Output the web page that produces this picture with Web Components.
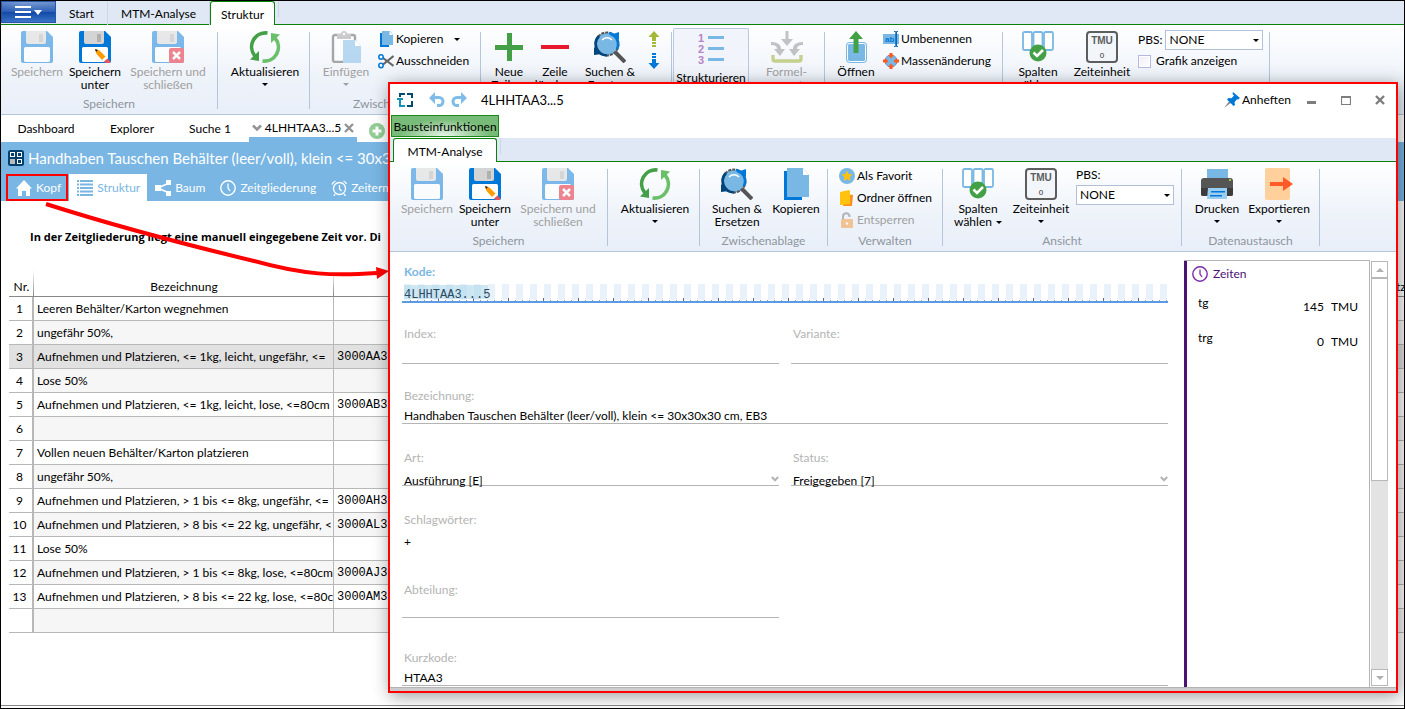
<!DOCTYPE html>
<html lang="de">
<head>
<meta charset="utf-8">
<title>4LHHTAA3...5 – Struktur</title>
<style>
  html, body { margin: 0; }
  body {
    font: 12px/16px Lato, "Open Sans", sans-serif;
    color: #000; background: #fff;
  }
</style>
</head>
<body>
<mtm-app></mtm-app>

<script>
const icons = {
  save: [32, '<path d="M2 0H26L32 6V30a2 2 0 0 1-2 2H2a2 2 0 0 1-2-2V2a2 2 0 0 1 2-2Z" fill="#0078d7"/><path d="M5 0H25V11a2 2 0 0 1-2 2H7a2 2 0 0 1-2-2Z" fill="#d4d4d4"/><path d="M18 3h4v8h-4z" fill="#b0b0b0"/><rect x="3" y="16" width="26" height="15" rx="1.5" fill="#fff"/>'],
  saveas: [32, '<path d="M2 0H26L32 6V30a2 2 0 0 1-2 2H2a2 2 0 0 1-2-2V2a2 2 0 0 1 2-2Z" fill="#0078d7"/><path d="M5 0H25V11a2 2 0 0 1-2 2H7a2 2 0 0 1-2-2Z" fill="#d4d4d4"/><path d="M18 3h4v8h-4z" fill="#b0b0b0"/><rect x="3" y="16" width="26" height="15" rx="1.5" fill="#fff"/><path d="M16 18l4.500 1.500L28 27l-3.500 3.500L17.500 23Z" fill="#ff9d00"/><path d="M16 18l3 1-2 2Z" fill="#222"/><path d="M26.500 25.500l2 2-3.500 3.500-2-2Z" fill="#fff"/><path d="M28.500 27.500l2 2a1.500 1.500 0 0 1-3 3l-2.500-2Z" fill="#e5535e"/>'],
  saveclose: [32, '<path d="M2 0H26L32 6V30a2 2 0 0 1-2 2H2a2 2 0 0 1-2-2V2a2 2 0 0 1 2-2Z" fill="#0078d7"/><path d="M5 0H25V11a2 2 0 0 1-2 2H7a2 2 0 0 1-2-2Z" fill="#d4d4d4"/><path d="M18 3h4v8h-4z" fill="#b0b0b0"/><rect x="3" y="16" width="26" height="15" rx="1.500" fill="#fff"/><rect x="17" y="17" width="15" height="15" rx="2" fill="#e81123"/><path d="M21 21l7 7M28 21l-7 7" stroke="#fff" stroke-width="2.500"/>'],
  refresh: [32, '<g fill="none" stroke-width="3.600"><path d="M18.500 2A14 14 0 0 0 6 25" stroke="#43a047"/><path d="M13.500 30A14 14 0 0 0 26 7" stroke="#6abf69"/></g><path d="M1 28.500L10 30V20Z" fill="#43a047"/><path d="M31 3.500L22 2V12Z" fill="#6abf69"/>'],
  paste: [32, '<rect x="3" y="4" width="22" height="27" rx="2" fill="#fff" stroke="#555" stroke-width="2.400"/><path d="M7 3h4a3 3 0 0 1 6 0h4v5H7Z" fill="#999"/><circle cx="14" cy="3" r="1.300" fill="#fff"/><path d="M13 9H25l6 6V32H13Z" fill="#79b8e4"/><path d="M25 9v6h6Z" fill="#fff"/>'],
  copy: [32, '<path d="M4 3H22V32H4Z" fill="#0078d7"/><path d="M7 0H23L29 7V29H7Z" fill="#79b8e4"/><path d="M23 0L29 7H23Z" fill="#fff"/><path d="M22.500 0V7.500H29" fill="none" stroke="#79b8e4"/>'],
  copysmall: [16, '<path d="M2 2H11V16H2Z" fill="#0078d7"/><path d="M4 0H12L15 3.500V14H4Z" fill="#79b8e4"/><path d="M11.500 0L15 4H11.500Z" fill="#fff"/>'],
  cut: [16, '<path d="M5 5L15.500 13M5 11.500L15.500 3" stroke="#666" stroke-width="2.200"/><circle cx="3" cy="4" r="2.200" fill="none" stroke="#0078d7" stroke-width="1.500"/><circle cx="3" cy="12.500" r="2.200" fill="none" stroke="#0078d7" stroke-width="1.500"/>'],
  plus: [32, '<path d="M14 2h5v12h11v5H19v11h-5V19H2v-5h12Z" fill="#43a047"/>'],
  minus: [32, '<path d="M2 14H30v4H2Z" fill="#e8192c"/>'],
  search: [32, '<path d="M20 20l11 11" stroke="#555" stroke-width="4"/><circle cx="13" cy="13" r="11.500" fill="#79b8e4" stroke="#555" stroke-width="2" stroke-dasharray="3 1"/><path d="M13 24.500A11.500 11.500 0 0 1 5 5M2 14a11 11 0 0 0 3 8" fill="none" stroke="#00457c" stroke-width="2.600"/><path d="M0 24V16l8 7Z" fill="#00457c"/><path d="M15 2a11.500 11.500 0 0 1 8 16" fill="none" stroke="#0078d7" stroke-width="2.600"/><path d="M16 4L25 1V9Z" fill="#0078d7"/><path d="M8 9c3-3 7-3 10 0" fill="none" stroke="#fff" stroke-width="1.600"/>'],
  moveup: [16, '<path d="M8 0l5.500 6H10v4H6V6H2.500Z M6 11h4v2H6Z M6 14h4v2H6Z" fill="#a4b83a"/>'],
  movedown: [16, '<path d="M8 16l5.500-6H10V6H6v4H2.500Z M6 3h4v2H6Z M6 0h4v2H6Z" fill="#0078d7"/>'],
  structure: [32, '<g fill="#b583c7" font-family="Liberation Sans, sans-serif" font-weight="bold" font-size="11"><text x="3" y="9">1</text><text x="3" y="20">2</text><text x="3" y="31">3</text></g><path d="M13 3h16v3H13ZM13 14h16v3H13ZM13 25h16v3H13Z" fill="#79b8e4"/>'],
  formula: [32, '<g fill="#8a8a8a"><path d="M14.500 0h3v8H22l-6 7-6-7h4.500Z"/><path d="M0 11c7 0 10 3 10 7h4l-5 7-6-7h3c0-3-2-4-6-4Z"/><path d="M32 11c-7 0-10 3-10 7h-4l5 7 6-7h-3c0-3 2-4 6-4Z"/></g><path d="M2 24v4a2 2 0 0 0 2 2h24a2 2 0 0 0 2-2v-4" fill="none" stroke="#97ab1f" stroke-width="3.400"/>'],
  open: [32, '<rect x="6.500" y="11.500" width="20" height="20" rx="3" fill="#79b8e4" stroke="#79b8e4"/><rect x="7.500" y="12.500" width="18" height="18" rx="2" fill="none" stroke="#fff"/><path d="M16 0l7 8h-4.500v14h-5V8H9Z" fill="#43a047"/>'],
  rename: [16, '<path d="M0 3h16v10H0Z" fill="#79b8e4"/><text x="2" y="11" font-family="Liberation Sans, sans-serif" font-weight="bold" font-size="8" fill="#0078d7">ab</text><path d="M11 0h1.500l.5 1 .5-1H15v1h-1v14h1v1h-1.500l-.5-1-.5 1H11v-1h1.300V1H11Z" fill="#0067c0"/>'],
  mass: [16, '<circle cx="8" cy="8" r="6" fill="#79b8e4" stroke="#4b9bd3"/><path d="M6.500 0h3v2H11L8 5.500 5 2h1.500ZM6.500 16h3v-2H11L8 10.500 5 14h1.500ZM0 6.500v3h2V11l3.500-3L2 5v1.500ZM16 6.500v3h-2V11l-3.500-3L14 5v1.500Z" fill="#ff5722"/>'],
  columns: [32, '<g fill="#fff" stroke="#79b8e4" stroke-width="1.800"><rect x="1" y="1" width="9" height="18" rx="1.500"/><rect x="11.500" y="1" width="9" height="18" rx="1.500"/><rect x="22" y="1" width="9" height="18" rx="1.500"/></g><circle cx="16" cy="22" r="8.500" fill="#43a047"/><path d="M11.500 21.500l3.500 3.500 6-6" fill="none" stroke="#fff" stroke-width="2.600"/>'],
  unit: [32, '<rect x="1" y="1" width="30" height="30" rx="3" fill="#f2f5fa" stroke="#5d5d5d" stroke-width="2"/><text x="16" y="13" text-anchor="middle" font-family="Liberation Sans, sans-serif" font-weight="bold" font-size="10" fill="#5d5d5d">TMU</text><text x="16" y="27" text-anchor="middle" font-family="Liberation Sans, sans-serif" font-size="8" fill="#333">0</text>'],
  printer: [32, '<path d="M6 1H27V12H6Z" fill="#79b8e4"/><path d="M3 10H29a3 3 0 0 1 3 3V26a2 2 0 0 1-2 2H2a2 2 0 0 1-2-2V13a3 3 0 0 1 3-3Z" fill="#555"/><path d="M0 20H32v6a2 2 0 0 1-2 2H2a2 2 0 0 1-2-2Z" fill="#3d3d3d"/><path d="M28 11h2v2h-2z" fill="#a4c639"/><path d="M7 20H26V31H6Z" fill="#9bcdf0"/><path d="M10 23h14v1.500H10ZM9 27h12v1.500H9Z" fill="#0078d7"/>'],
  exporticon: [32, '<rect x="2" width="25" height="32" rx="2" fill="#ffcf9c"/><path d="M7 14H20V9l10 7-10 7V18H7Z" fill="#ff5b29"/>'],
  favorite: [16, '<circle cx="8" cy="8" r="8" fill="#79b8e4"/><path d="M8 2.500l1.600 3.600 3.900.4-2.900 2.600.8 3.900L8 11l-3.400 2 .8-3.900L2.500 6.500l3.900-.4Z" fill="#ffc20e"/>'],
  folder: [16, '<path d="M5 4l9 1-1 11H4Z" fill="#ff8f1c"/><path d="M1 2l9-2 1 1v13L1 15Z" fill="#ffc20e"/>'],
  unlock: [16, '<path d="M4 8V4a3.300 3.300 0 0 1 6.500 0v1" fill="none" stroke="#777" stroke-width="2"/><rect x="2" y="7" width="12" height="9" rx="1" fill="#f59331"/><circle cx="8" cy="11.500" r="1.200" fill="#fff"/>'],
  home: [16, '<path d="M8 0l8 8.500h-2V16h-4v-5H6v5H2V8.500H0Z" fill="currentColor"/>'],
  list: [16, '<path d="M0 0h2v2H0ZM3 0h13v2H3ZM0 3.500h2v2H0ZM3 3.500h13v2H3ZM0 7h2v2H0ZM3 7h13v2H3ZM0 10.500h2v2H0ZM3 10.500h13v2H3ZM0 14h2v2H0ZM3 14h13v2H3Z" fill="currentColor"/>'],
  tree: [16, '<path d="M3 8L14 3M3 8l11 5" stroke="currentColor" stroke-width="1.800"/><path d="M0 5h6v6H0ZM11 0h5v5h-5ZM11 11h5v5h-5Z" fill="currentColor"/>'],
  clock: [16, '<circle cx="8" cy="8" r="7.200" fill="none" stroke="currentColor" stroke-width="1.400"/><path d="M8 3.500V8l2 3" fill="none" stroke="currentColor" stroke-width="1.300"/>'],
  alarm: [16, '<circle cx="8.500" cy="8.500" r="6" fill="none" stroke="currentColor" stroke-width="1.300"/><path d="M8.500 5v4l2 2M1 4.500A6 6 0 0 1 4.500 1M12.500 1A6 6 0 0 1 15.500 4M4 14l-1 2M13 14l1.500 2" fill="none" stroke="currentColor" stroke-width="1.300"/>'],
  module: [16, '<rect width="16" height="16" rx="2.500" fill="#00406e"/><g fill="none" stroke="#fff"><rect x="2.500" y="2.500" width="4" height="4"/><rect x="9.500" y="2.500" width="4" height="4"/><rect x="9.500" y="9.500" width="4" height="4"/></g><path d="M2 9h5v5H2z" fill="#bbb"/>'],
  add: [16, '<circle cx="8" cy="8" r="8" fill="#92cd94"/><path d="M6.500 3.500h3v3h3v3h-3v3h-3v-3h-3v-3h3Z" fill="#fff"/>'],
  chevron: [10, '<path d="M1 2.500l4 4 4-4" fill="none" stroke="currentColor" stroke-width="2.600"/>'],
  close: [10, '<path d="M1 1l8 8M9 1L1 9" stroke="currentColor" stroke-width="2.400"/>'],
  maximize: [10, '<path d="M.5 1.500h9v8h-9ZM.5 2.500h9" fill="none" stroke="currentColor" stroke-width="1.200"/>'],
  minimize: [10, '<path d="M0 6h9v3H0Z" fill="currentColor"/>'],
  logo: [16, '<path d="M3 5V2h5M10 2h5v4M15 9v5h-5" fill="none" stroke="#004b6e" stroke-width="2"/><path d="M0 7h6M3 6v8h5" fill="none" stroke="#1192b8" stroke-width="2"/>'],
  undo: [16, '<path d="M0 6l6-6v4h4a5.500 5.500 0 0 1 0 11H8v-3h2a2.500 2.500 0 0 0 0-5H6v5Z" fill="#7fbce8"/>'],
  redo: [16, '<path d="M16 6l-6-6v4H6a5.500 5.500 0 0 0 0 11h2v-3H6a2.500 2.500 0 0 1 0-5h4v5Z" fill="#7fbce8"/>'],
  pin: [16, '<path d="M0 16l6-8 2 2Z" fill="#8a8a8a"/><path d="M9 0l7 6-2 1.500-1-.3-2.500 3 .5 2.800-1.500 1L3 7.500 4.500 6l3 .3L10 3.500 8.500 2Z" fill="#0078d7"/>'],
  up: [8, '<path d="M0 6L4 2l4 4Z" fill="currentColor"/>'],
  down: [8, '<path d="M0 2h8L4 6Z" fill="currentColor"/>'],
};

class ShadowElement extends HTMLElement {
  connectedCallback() {
    if (this.shadowRoot) return;
    const root = this.attachShadow({ mode: "open" });
    const t = document.createElement("template");
    t.innerHTML = this.render();
    root.append(t.content.cloneNode(true));
  }
  attr(name, fallback = "") { return this.getAttribute(name) ?? fallback; }
}

customElements.define("mtm-icon", class extends ShadowElement {
  render() {
    const [box, shapes] = icons[this.attr("name")];
    const size = this.attr("size", box);
    return `<style>:host{display:inline-flex;flex:none}svg{display:block}</style>
      <svg width="${size}" height="${size}" viewBox="0 0 ${box} ${box}" aria-hidden="true">${shapes}</svg>`;
  }
});

/* Large ribbon button: icon over a label of one or two lines. */
customElements.define("ribbon-button", class extends ShadowElement {
  render() {
    return `<style>
      :host{display:flex;flex:none;width:var(--w,58px)}
      button{all:unset;box-sizing:border-box;width:100%;display:flex;flex-direction:column;align-items:center;
        gap:2px;line-height:13px;text-align:center;white-space:nowrap}
      button:disabled{color:#a0a0a0}
      button:disabled mtm-icon{opacity:.5}
      .arrow{border:3px solid transparent;border-top-color:currentColor;border-bottom:0;width:0;margin-top:3px}
      :host([pressed]) button{border:1px solid #b9c9de;border-bottom:0;background:#f1f5fb;border-radius:2px 2px 0 0;
        gap:6px;padding-top:4px;margin-top:-3px}
    </style>
    <button type="button" ${this.hasAttribute("disabled") ? "disabled" : ""} ${this.hasAttribute("pressed") ? 'aria-pressed="true"' : ""}>
      <mtm-icon name="${this.attr("icon")}"></mtm-icon>
      <span><slot></slot></span>
      ${this.hasAttribute("menu") ? '<span class="arrow"></span>' : ""}
    </button>`;
  }
});

customElements.define("menu-arrow", class extends ShadowElement {
  render() {
    return `<style>:host{display:inline-block;vertical-align:middle;margin-left:var(--gap,4px);border:3px solid transparent;
      border-top-color:currentColor;border-bottom:0;width:0}</style>`;
  }
});

/* Small ribbon button: 16px icon beside its label. */
customElements.define("ribbon-item", class extends ShadowElement {
  render() {
    return `<style>
      :host{display:flex}
      button{all:unset;display:flex;align-items:center;gap:2px;height:18px;white-space:nowrap}
      button:disabled{color:#a0a0a0}
      button:disabled mtm-icon{opacity:.5}
    </style>
    <button type="button" ${this.hasAttribute("disabled") ? "disabled" : ""} aria-label="${this.attr("label", this.textContent)}">
      <mtm-icon name="${this.attr("icon")}"></mtm-icon><span><slot></slot></span>
    </button>`;
  }
});

customElements.define("ribbon-group", class extends ShadowElement {
  render() {
    return `<style>
      :host{display:flex;flex:none;width:var(--group)}
      .body{flex:1;min-width:0;display:flex;flex-direction:column}
      .items{flex:1;display:flex;align-items:flex-start;padding:6px 0 0 var(--pad,4px)}
      .label{height:18px;line-height:16px;text-align:center;color:#8f959d}
      .rule{flex:none;width:1px;margin:7px 0 5px;background:#b4c6da}
    </style>
    <div class="body"><div class="items"><slot></slot></div><div class="label">${this.attr("label")}</div></div>
    <div class="rule"></div>`;
  }
});

customElements.define("ribbon-bar", class extends ShadowElement {
  render() {
    return `<style>:host{display:flex;height:89px;overflow:hidden;border-bottom:1px solid #b4c6da;
      background:linear-gradient(#fff,#eef3fa 60%,#e9eff9)}</style><slot></slot>`;
  }
});

/* Stack of small controls inside a ribbon group. */
customElements.define("ribbon-stack", class extends ShadowElement {
  render() {
    return `<style>:host{display:flex;flex-direction:column;gap:4px;margin:-1px 0 0 var(--lead,0)}</style><slot></slot>`;
  }
});

customElements.define("ribbon-select", class extends ShadowElement {
  render() {
    const stacked = this.hasAttribute("stacked");
    return `<style>
      label{display:flex;flex-direction:${stacked ? "column" : "row"};gap:3px;
        align-items:${stacked ? "flex-start" : "center"};line-height:${stacked ? "14px" : "20px"}}
      .box{position:relative;display:flex}
      select{appearance:none;box-sizing:border-box;width:98px;height:20px;padding:0 3px;margin:0;border:1px solid #b2bfd8;border-radius:0;
        background:#fff;font:inherit;line-height:18px;color:#000}
      menu-arrow{position:absolute;right:4px;top:9px}
    </style>
    <label>PBS:<span class="box"><select><option>NONE</option></select><menu-arrow></menu-arrow></span></label>`;
  }
});

customElements.define("ribbon-check", class extends ShadowElement {
  render() {
    return `<style>
      label{display:flex;align-items:center;gap:5px;line-height:14px;white-space:nowrap}
      input{appearance:none;box-sizing:border-box;width:13px;height:13px;margin:0;border:1px solid #b5b9e0;
        background:linear-gradient(135deg,#ececf6,#fff);box-shadow:inset 0 0 0 1px #fff}
    </style><label><input type="checkbox"><slot></slot></label>`;
  }
});

/* Row of ribbon tabs; the selected one is open towards the ribbon below. */
customElements.define("ribbon-tabs", class extends ShadowElement {
  render() {
    const active = this.attr("active");
    return `<style>
      :host{display:flex;height:24px;background:#dfe8f4;box-shadow:inset 0 -1px #0a800a;padding-left:var(--pad,0)}
      a{box-sizing:border-box;display:block;height:24px;line-height:26px;text-align:center;color:#000;text-decoration:none;width:var(--w);
        border-right:1px solid #cbd6e6;background:linear-gradient(#0a800a,#0a800a) bottom/100% 1px no-repeat}
      a[aria-current]{background:#fff;border:1px solid #0a800a;border-width:1px 1px 0;border-radius:3px 3px 0 0}
      i{width:3px;height:16px;border-right:1px solid #cbd6e6}
    </style><slot></slot>
    ${this.attr("tabs").split(";").map(t => { const [n, w] = t.split(":");
      return `<a href="#" style="--w:${w}px" ${n === active ? 'aria-current="page"' : ""}>${n}</a>`; }).join("")}<i></i>`;
  }
});

customElements.define("app-menu", class extends ShadowElement {
  render() {
    return `<style>
      button{all:unset;box-sizing:border-box;width:55px;height:22px;display:flex;align-items:center;justify-content:center;gap:3px;
        border:1px solid #2a56a8;background:linear-gradient(90deg,#1f55ad55,#fff0 40%,#1f55ad33),linear-gradient(#7f9fd6,#2f62b8 48%,#0f48a6 52%,#3f78cb)}
      .bars{width:16px;height:12px;box-sizing:border-box;border:solid #fff;border-width:2px 0;background:linear-gradient(#fff,#fff) center/100% 2px no-repeat}
      .tri{border:4px solid transparent;border-top:5px solid #fff;border-bottom:0}
    </style><button type="button" aria-label="Menü"><span class="bars"></span><span class="tri"></span></button>`;
  }
});

customElements.define("document-tabs", class extends ShadowElement {
  render() {
    return `<style>
      :host{display:flex;height:27px}
      a{box-sizing:border-box;color:#000;text-decoration:none;line-height:28px;text-align:center;width:var(--w)}
      .on{box-sizing:border-box;width:108px;margin-left:2px;display:flex;align-items:center;justify-content:space-between;padding:0 3px 0 3px;border-bottom:5px solid #79b6e3;color:#949494}
      .on a{line-height:18px;margin-top:4px}
      button{all:unset;display:flex;color:#949494;margin-top:4px}
      mtm-icon{color:#949494}
      .add{margin:8px 0 0 12px}
      .on > mtm-icon{margin-top:4px}
    </style>
    <a href="#" style="--w:90px">Dashboard</a><a href="#" style="--w:82px">Explorer</a><a href="#" style="--w:74px">Suche 1</a>
    <div class="on"><mtm-icon name="chevron"></mtm-icon><a href="#">4LHHTAA3...5</a><button type="button" aria-label="Schließen"><mtm-icon name="close"></mtm-icon></button></div>
    <button type="button" class="add" aria-label="Neuer Tab"><mtm-icon name="add"></mtm-icon></button>`;
  }
});

customElements.define("document-header", class extends ShadowElement {
  render() {
    const tabs = [["home","Kopf"],["list","Struktur"],["tree","Baum"],["clock","Zeitgliederung"],["alarm","Zeitermittlung"]];
    return `<style>
      :host{display:block;background:#79b6e3;color:#fff}
      h1{margin:0;height:32px;padding-left:7px;display:flex;align-items:center;gap:4px;font-weight:400;font-size:15px;white-space:nowrap}
      nav{display:flex;padding-left:5px;height:27px}
      a{display:flex;align-items:center;gap:4px;padding:0 7px 0 8px;color:#fff;text-decoration:none}
      .Kopf{box-shadow:inset 0 0 0 2px #f00;padding:0 7px 0 10px;margin-right:1px}
      [aria-current]{background:#fff;color:#79b6e3}
    </style>
    <h1><mtm-icon name="module"></mtm-icon>Handhaben Tauschen Behälter (leer/voll), klein &lt;= 30x30x30 cm, EB3</h1>
    <nav>${tabs.map(([i, n]) => `<a href="#" class="${n}" ${n === "Struktur" ? 'aria-current="page"' : ""}><mtm-icon name="${i}"></mtm-icon>${n}</a>`).join("")}</nav>`;
  }
});

customElements.define("structure-table", class extends ShadowElement {
  render() {
    const rows = [
      ["Leeren Behälter/Karton wegnehmen"], ["ungefähr 50%,"],
      ["Aufnehmen und Platzieren, <= 1kg, leicht, ungefähr, <=", "3000AA3."], ["Lose 50%"],
      ["Aufnehmen und Platzieren, <= 1kg, leicht, lose, <=80cm", "3000AB3."], [""],
      ["Vollen neuen Behälter/Karton platzieren"], ["ungefähr 50%,"],
      ["Aufnehmen und Platzieren, > 1 bis <= 8kg, ungefähr, <=", "3000AH3."],
      ["Aufnehmen und Platzieren, > 8 bis <= 22 kg, ungefähr, <", "3000AL3."], ["Lose 50%"],
      ["Aufnehmen und Platzieren, > 1 bis <= 8kg, lose, <=80cm", "3000AJ3."],
      ["Aufnehmen und Platzieren, > 8 bis <= 22 kg, lose, <=80c", "3000AM3."], [""],
    ];
    const esc = s => (s || "").replace(/</g, "&lt;").replace(/>/g, "&gt;");
    return `<style>
      :host{display:block;padding-left:8px}
      table{width:100%;table-layout:fixed;border-collapse:separate;border-spacing:0}
      td,th{box-sizing:border-box;padding:0 0 0 3px;overflow:hidden;white-space:nowrap;font-weight:400;border-bottom:1px solid #b8b8b8}
      th{height:27px;padding:7px 0 0;border-bottom-color:#888}
      td{height:24px}
      th:not(:last-child){background:linear-gradient(#fff,#888) right/1px 100% no-repeat}
      td:nth-child(1){text-align:center;padding:0 2px 0 0;border-right:2px solid #b8b8b8}
      td:nth-child(2){border-right:1px solid #b8b8b8}
      td:nth-child(3){font-family:"Liberation Mono",monospace}
      tr:nth-child(even) td:not(:first-child){background:#f6f6f6}
      tr.sel td{background:#e1e1e1}
      .nr{width:25px}.name{width:300px}.last{width:8px}
      th:last-child{text-align:left;padding-left:0}
    </style>
    <table><colgroup><col class="nr"><col class="name"><col><col class="last"></colgroup>
      <thead><tr><th>Nr.</th><th>Bezeichnung</th><th></th><th>tz</th></tr></thead>
      <tbody>${rows.map((r, i) => `<tr ${i === 2 ? 'class="sel"' : ""}><td>${i < 13 ? i + 1 : ""}</td><td>${esc(r[0])}</td><td>${esc(r[1])}</td><td></td></tr>`).join("")}</tbody>
    </table>`;
  }
});

/* Labelled form field with an underline; kind is text, code, select or plus. */
customElements.define("form-field", class extends ShadowElement {
  render() {
    const kind = this.attr("kind", "text"), value = this.attr("value");
    const control = kind === "select"
      ? `<select id="c"><option>${value}</option></select><mtm-icon name="chevron" size="8"></mtm-icon>`
      : kind === "plus" ? `<button id="c" type="button">+</button>`
      : `<input id="c" type="text" value="${value}">`;
    return `<style>
      :host{display:block;height:62px}
      :host([wide]){grid-column:1/-1}
      label{display:block;line-height:16px;padding-left:2px;color:#b4b4b4}
      .box{position:relative;display:flex;height:20px}
      input,select{appearance:none;box-sizing:border-box;width:100%;height:20px;margin:0;padding:4px 2px 0;border:0;border-bottom:1px solid #b4b4b4;
        border-radius:0;background:none;font:inherit;color:#000;outline:0}
      :host([kind=select]) .box{box-shadow:inset 0 -1px #b4b4b4}
      :host([kind=select]) select{height:24px;padding-top:6px;border:0;line-height:18px}
      mtm-icon{position:absolute;right:0;top:9px;color:#b4b4b4}
      button{all:unset;padding:6px 2px 0;line-height:16px}
      :host([kind=code]) label{font-weight:700;color:#79b6e3}
      :host([kind=code]) .box{height:23px}
      :host([kind=code]) input{height:23px;padding-top:8px;border-bottom:2px solid #5a9be3;font-family:"Liberation Mono",monospace;color:#2b4a63;
        background:
          linear-gradient(#add8ea99,#add8ea99) 2px 5px/84px 14px no-repeat,
          repeating-linear-gradient(90deg,#0000 0 34px,#667 34px 35px) 2px 100%/100% 3px no-repeat,
          repeating-linear-gradient(90deg,#0000 0 6px,#99a 6px 7px) 2px 100%/100% 1px no-repeat,
          repeating-linear-gradient(90deg,#e9f2fb 0 7px,#0000 7px 14px) 2px 4px/100% 16px no-repeat}
      :host([low]) .box,:host([low]) input{height:22px}
    </style><label for="c">${this.attr("label")}</label><div class="box">${control}</div>`;
  }
});

customElements.define("time-panel", class extends ShadowElement {
  render() {
    return `<style>
      :host{display:block;box-sizing:border-box;flex:none;width:186px;border:solid #b4b4b4;border-width:1px 1px 0 0;
        box-shadow:inset 3px 0 #4b1173}
      h2{margin:5px 0 13px;padding-left:8px;display:flex;align-items:center;gap:5px;font-size:12px;font-weight:400;color:#4b1173}
      mtm-icon{color:#7b2aa8}
      dl{margin:0;padding:0 11px 0 14px;display:grid;grid-template-columns:1fr auto 34px;row-gap:15px;line-height:16px}
      dt,dd{margin:0} dd{padding-top:4px;text-align:right}
    </style>
    <h2><mtm-icon name="clock"></mtm-icon>Zeiten</h2>
    <dl><dt>tg</dt><dd>145</dd><dd>TMU</dd><dt>trg</dt><dd>0</dd><dd>TMU</dd></dl>`;
  }
});

customElements.define("scroll-rail", class extends ShadowElement {
  render() {
    return `<style>
      :host{display:flex;flex-direction:column;flex:none;width:17px;margin:1px 8px 1px 1px;background:#e3e3e3;color:#b0b0b0}
      button{all:unset;box-sizing:border-box;height:17px;flex:none;display:flex;align-items:center;justify-content:center;border:1px solid #b8b8b8;background:#fff}
      .thumb{flex:0 1 203px;border:1px solid #b8b8b8;box-sizing:border-box;background:#fff}
      .gap{flex:1}
    </style><button type="button" aria-label="Nach oben"><mtm-icon name="up"></mtm-icon></button><div class="thumb"></div><div class="gap"></div>
    <button type="button" aria-label="Nach unten"><mtm-icon name="down"></mtm-icon></button>`;
  }
});

customElements.define("block-window", class extends ShadowElement {
  render() {
    return `<style>
      :host{display:flex;flex-direction:column;box-sizing:border-box;border:2px solid #f00;background:#fff;box-shadow:2px 3px 16px #0006;overflow:hidden}
      header{flex:none;height:31px;display:flex;align-items:center;padding:0 11px 0 7px}
      header button{all:unset;display:flex;align-items:center;color:#7d7d7d}
      h2{margin:0 auto 0 14px;font-size:13px;font-weight:400}
      .undo{margin-left:16px!important}.redo{margin-left:6px!important}
      .pin{color:#000!important;gap:2px;margin-right:16px!important}
      .win{display:flex;gap:24px}
      .context{flex:none;display:flex;height:23px;padding-left:1px}
      .context span{box-sizing:border-box;width:108px;height:22px;line-height:21px;border:1px solid #1b8a1b;text-align:center;
        background:radial-gradient(ellipse at 50% 100%,#e8f5e8,#78bb78 60%)}
      main{flex:1;min-height:0;display:flex;padding-top:8px;overflow:hidden}
      form{flex:1;min-width:0;display:grid;grid-template-columns:1fr 1fr;column-gap:12px;align-content:start;padding:4px 16px 0 12px;height:0}
      .tags{height:70px}.dept{height:68px}
      footer{flex:none;height:3px;border-top:1px solid #b4b4b4;background:#ccc}
    </style>
    <header>
      <mtm-icon name="logo"></mtm-icon>
      <button type="button" class="undo" aria-label="Rückgängig"><mtm-icon name="undo"></mtm-icon></button>
      <button type="button" class="redo" aria-label="Wiederholen"><mtm-icon name="redo"></mtm-icon></button>
      <h2>4LHHTAA3...5</h2>
      <button type="button" class="pin"><mtm-icon name="pin"></mtm-icon>Anheften</button>
      <div class="win">
        <button type="button" aria-label="Minimieren"><mtm-icon name="minimize"></mtm-icon></button>
        <button type="button" aria-label="Maximieren"><mtm-icon name="maximize"></mtm-icon></button>
        <button type="button" aria-label="Schließen"><mtm-icon name="close"></mtm-icon></button>
      </div>
    </header>
    <div class="context"><span>Bausteinfunktionen</span></div>
    <ribbon-tabs tabs="MTM-Analyse:104" active="MTM-Analyse" style="--pad:3px"></ribbon-tabs>
    <ribbon-bar>
      <ribbon-group label="Speichern" style="--group:218px;--pad:8px">
        <ribbon-button icon="save" disabled>Speichern</ribbon-button>
        <ribbon-button icon="saveas">Speichern<br>unter</ribbon-button>
        <ribbon-button icon="saveclose" disabled style="--w:88px">Speichern und<br>schließen</ribbon-button>
      </ribbon-group>
      <ribbon-group style="--group:92px"><ribbon-button icon="refresh" menu style="--w:86px">Aktualisieren</ribbon-button></ribbon-group>
      <ribbon-group label="Zwischenablage" style="--group:128px;--pad:6px">
        <ribbon-button icon="search" style="--w:62px">Suchen &amp;<br>Ersetzen</ribbon-button>
        <ribbon-button icon="copy" style="--w:56px">Kopieren</ribbon-button>
      </ribbon-group>
      <ribbon-group label="Verwalten" style="--group:115px;--pad:0">
        <ribbon-stack style="--lead:11px">
          <ribbon-item icon="favorite">Als Favorit</ribbon-item>
          <ribbon-item icon="folder">Ordner öffnen</ribbon-item>
          <ribbon-item icon="unlock" disabled>Entsperren</ribbon-item>
        </ribbon-stack>
      </ribbon-group>
      <ribbon-group label="Ansicht" style="--group:239px">
        <ribbon-button icon="columns" style="--w:62px">Spalten<br>wählen<menu-arrow></menu-arrow></ribbon-button>
        <ribbon-button icon="unit" menu style="--w:64px">Zeiteinheit</ribbon-button>
        <ribbon-select stacked style="margin-left:3px"></ribbon-select>
      </ribbon-group>
      <ribbon-group label="Datenaustausch" style="--group:138px">
        <ribbon-button icon="printer" menu style="--w:62px">Drucken</ribbon-button>
        <ribbon-button icon="exporticon" menu style="--w:62px">Exportieren</ribbon-button>
      </ribbon-group>
    </ribbon-bar>
    <main>
      <form>
        <form-field wide kind="code" label="Kode:" value="4LHHTAA3...5"></form-field>
        <form-field low label="Index:"></form-field>
        <form-field low label="Variante:"></form-field>
        <form-field wide label="Bezeichnung:" value="Handhaben Tauschen Behälter (leer/voll), klein &amp;lt;= 30x30x30 cm, EB3"></form-field>
        <form-field kind="select" label="Art:" value="Ausführung [E]"></form-field>
        <form-field kind="select" label="Status:" value="Freigegeben [7]"></form-field>
        <form-field wide class="tags" kind="plus" label="Schlagwörter:"></form-field>
        <form-field class="dept" label="Abteilung:"></form-field>
        <form-field wide label="Kurzkode:" value="HTAA3"></form-field>
      </form>
      <time-panel></time-panel>
      <scroll-rail></scroll-rail>
    </main>
    <footer></footer>`;
  }
});

customElements.define("callout-arrow", class extends ShadowElement {
  render() {
    return `<style>:host{display:block;pointer-events:none}svg{display:block}</style>
      <svg width="346" height="80" viewBox="0 0 346 80" aria-hidden="true">
        <path d="M2 4C90 32 160 49 210 61C260 75 290 76 333 73" fill="none" stroke="#f00" stroke-width="4"/>
        <path d="M332 67L345 71L333 79Z" fill="#f00"/></svg>`;
  }
});

customElements.define("mtm-app", class extends ShadowElement {
  render() {
    return `<style>
      :host{position:relative;display:flex;flex-direction:column;box-sizing:border-box;min-height:100vh;border:1px solid #000;overflow:hidden}
      .note{margin:28px 0 25px 29px;font:700 11px/16px "Open Sans",sans-serif;white-space:nowrap}
      .status{margin-top:auto;height:2px;border-top:1px solid #888}
      callout-arrow{position:absolute;left:43px;top:199px}
      block-window{position:absolute;left:387px;top:81px;right:6px;bottom:15px}
    </style>
    <ribbon-tabs tabs="Start:52;MTM-Analyse:102;Struktur:65" active="Struktur"><app-menu></app-menu></ribbon-tabs>
    <ribbon-bar>
      <ribbon-group label="Speichern" style="--group:217px;--pad:7px">
        <ribbon-button icon="save" disabled>Speichern</ribbon-button>
        <ribbon-button icon="saveas">Speichern<br>unter</ribbon-button>
        <ribbon-button icon="saveclose" disabled style="--w:88px">Speichern und<br>schließen</ribbon-button>
      </ribbon-group>
      <ribbon-group style="--group:92px"><ribbon-button icon="refresh" menu style="--w:86px">Aktualisieren</ribbon-button></ribbon-group>
      <ribbon-group label="Zwischenablage" style="--group:171px;--pad:7px">
        <ribbon-button icon="paste" menu disabled>Einfügen</ribbon-button>
        <ribbon-stack style="--lead:3px">
          <ribbon-item icon="copysmall">Kopieren<menu-arrow style="--gap:11px"></menu-arrow></ribbon-item>
          <ribbon-item icon="cut">Ausschneiden</ribbon-item>
        </ribbon-stack>
      </ribbon-group>
      <ribbon-group style="--group:191px">
        <ribbon-button icon="plus" style="--w:48px">Neue<br>Zeile<menu-arrow></menu-arrow></ribbon-button>
        <ribbon-button icon="minus" style="--w:44px">Zeile<br>löschen</ribbon-button>
        <ribbon-button icon="search" style="--w:66px">Suchen &amp;<br>Ersetzen</ribbon-button>
        <ribbon-stack style="--lead:3px">
          <ribbon-item icon="moveup" label="Nach oben"></ribbon-item>
          <ribbon-item icon="movedown" label="Nach unten"></ribbon-item>
        </ribbon-stack>
      </ribbon-group>
      <ribbon-group style="--group:153px;--pad:1px">
        <ribbon-button icon="structure" pressed style="--w:76px">Strukturieren</ribbon-button>
        <ribbon-button icon="formula" disabled style="--w:75px">Formel-<br>parameter</ribbon-button>
      </ribbon-group>
      <ribbon-group style="--group:178px">
        <ribbon-button icon="open" menu style="--w:54px">Öffnen</ribbon-button>
        <ribbon-stack>
          <ribbon-item icon="rename">Umbenennen</ribbon-item>
          <ribbon-item icon="mass">Massenänderung</ribbon-item>
        </ribbon-stack>
      </ribbon-group>
      <ribbon-group style="--group:267px">
        <ribbon-button icon="columns" style="--w:62px">Spalten<br>wählen<menu-arrow></menu-arrow></ribbon-button>
        <ribbon-button icon="unit" menu style="--w:66px">Zeiteinheit</ribbon-button>
        <ribbon-stack style="--lead:3px">
          <ribbon-select></ribbon-select>
          <ribbon-check>Grafik anzeigen</ribbon-check>
        </ribbon-stack>
      </ribbon-group>
    </ribbon-bar>
    <document-tabs></document-tabs>
    <document-header></document-header>
    <div class="note">In der Zeitgliederung liegt eine manuell eingegebene Zeit vor. Di</div>
    <structure-table></structure-table>
    <div class="status"></div>
    <callout-arrow></callout-arrow>
    <block-window></block-window>`;
  }
});
</script>
</body>
</html>
